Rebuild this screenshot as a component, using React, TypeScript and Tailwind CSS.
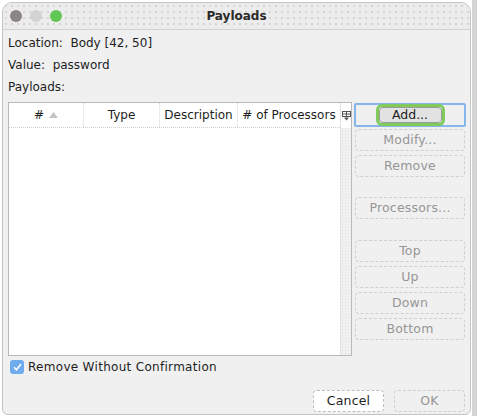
import React from "react";

const font = { fontFamily: '"DejaVu Sans", "Liberation Sans", sans-serif' };

function Btn({ label, disabled = true, className = "" }: { label: string; disabled?: boolean; className?: string }) {
  return (
    <div
      className={
        "h-[22px] w-[110px] rounded-[4px] border border-dashed flex items-center justify-center text-[12.5px] tracking-[0.2px] " +
        (disabled ? "border-[#cfcfcf] text-[#969696] bg-[#f0f0f0] " : "border-[#bdbdbd] text-[#1e1e1e] bg-white ") +
        className
      }
    >
      {label}
    </div>
  );
}

export default function App() {
  return (
    <div className="w-[477px] h-[416px] bg-white overflow-hidden relative" style={font}>
      <div className="absolute right-0 top-0 w-[5px] h-full bg-[#d4d4d4]" />
      <div className="ml-[2px] mt-[2px] w-[469px] h-[413px] rounded-t-[10px] rounded-b-[6px] border border-[#c4c4c4] bg-[#f0f0f0] flex flex-col overflow-hidden">
        {/* title bar */}
        <div className="h-[27px] shrink-0 relative flex items-center justify-center border-b border-[#d2d2d2] bg-[#ececec] bg-[radial-gradient(#d2d2d2_0.7px,transparent_0.8px)] bg-[length:6px_6px]">
          <div className="absolute left-[7px] top-[7px] flex gap-[8px]">
            <div className="w-[12px] h-[12px] rounded-full bg-[#8a8685]" />
            <div className="w-[12px] h-[12px] rounded-full bg-[#d3d3d3]" />
            <div className="w-[12px] h-[12px] rounded-full bg-[#62c654]" />
          </div>
          <span className="text-[12px] font-bold text-[#2a2a2a]">Payloads</span>
        </div>

        {/* content */}
        <div className="pl-[5px] pt-[2px] flex flex-col text-[12px] text-[#1e1e1e]">
          <div className="h-[22px] leading-[22px]">Location:&nbsp; Body [42, 50]</div>
          <div className="h-[22px] leading-[22px]">Value:&nbsp; password</div>
          <div className="h-[22px] leading-[22px]">Payloads:</div>

          <div className="mt-[4px] flex">
            {/* table */}
            <div className="w-[344px] h-[254px] border border-[#b8b8b8] bg-white flex">
              <div className="flex-1 flex flex-col">
                <div className="h-[25px] flex border-b border-dotted border-[#cfcfcf] text-[12px]">
                  <div className="w-[75px] flex items-center justify-center gap-[5px] border-r border-dotted border-[#d8d8d8]">
                    <span>#</span>
                    <svg width="9" height="6" viewBox="0 0 9 6"><path d="M0 6 L4.5 0 L9 6 Z" fill="#c4c4c4" /></svg>
                  </div>
                  <div className="w-[76px] flex items-center justify-center border-r border-dotted border-[#d8d8d8]">Type</div>
                  <div className="w-[78px] flex items-center justify-center border-r border-dotted border-[#d8d8d8]">Description</div>
                  <div className="flex-1 flex items-center justify-center whitespace-nowrap">
                    # of Processors
                  </div>
                </div>
                <div className="flex-1" />
              </div>
              <div className="w-[11px] flex flex-col border-l border-[#e2e2e2] bg-[#f1f1f1] bg-[radial-gradient(#dcdcdc_0.7px,transparent_0.8px)] bg-[length:3px_3px]">
                <div className="h-[25px] bg-white flex items-center justify-center">
                  <svg width="9" height="10" viewBox="0 0 9 10">
                    <rect x="0.5" y="0.5" width="8" height="5" fill="none" stroke="#555" strokeWidth="1" />
                    <line x1="0.5" y1="3" x2="8.5" y2="3" stroke="#555" />
                    <line x1="4.5" y1="0.5" x2="4.5" y2="5.5" stroke="#555" />
                    <path d="M2 6.5 L4.5 9.5 L7 6.5 Z" fill="#555" />
                  </svg>
                </div>
              </div>
            </div>

            {/* buttons */}
            <div className="ml-[2px] flex flex-col">
              <div className="w-[112px] h-[24px] mt-[1px] border-2 border-[#86b5ea] rounded-[2px] flex items-center justify-center">
                <div className="w-[69px] h-[22px] rounded-[6px] border-[3px] border-[#7ecb5c] flex items-center justify-center">
                  <div className="w-[63px] h-[16px] rounded-[4px] bg-[#e2e2e2] border border-[#9a9a9a] flex items-center justify-center text-[12.5px] text-[#1e1e1e]">
                    Add...
                  </div>
                </div>
              </div>
              <Btn label="Modify..." className="mt-[2px] ml-[1px]" />
              <Btn label="Remove" className="mt-[4px] ml-[1px]" />
              <Btn label="Processors..." className="mt-[20px] ml-[1px]" />
              <Btn label="Top" className="mt-[21px] ml-[1px]" />
              <Btn label="Up" className="mt-[4px] ml-[1px]" />
              <Btn label="Down" className="mt-[4px] ml-[1px]" />
              <Btn label="Bottom" className="mt-[4px] ml-[1px]" />
            </div>
          </div>

          <div className="mt-[3px] ml-[2px] flex items-center gap-[4px] h-[16px]">
            <div className="w-[14px] h-[14px] rounded-[3px] bg-[#6fabef] flex items-center justify-center">
              <svg width="9" height="8" viewBox="0 0 9 8">
                <path d="M1 4.2 L3.5 6.8 L8 1" fill="none" stroke="white" strokeWidth="1.6" />
              </svg>
            </div>
            <span className="tracking-[0.3px]">Remove Without Confirmation</span>
          </div>

          <div className="mt-[15px] flex justify-end pr-[5px] gap-[10px]">
            <Btn label="Cancel" disabled={false} className="!w-[71px]" />
            <Btn label="OK" className="!w-[71px]" />
          </div>
        </div>
      </div>
    </div>
  );
}
